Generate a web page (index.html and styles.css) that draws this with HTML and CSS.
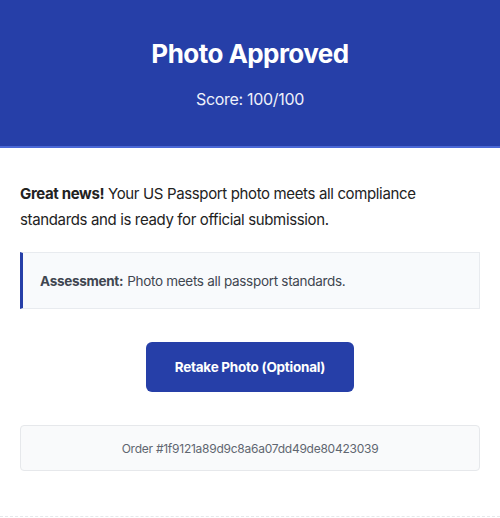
FILE: index.html
```html
<!DOCTYPE html>
<html>
<head>
<meta charset="utf-8">
<link rel="stylesheet" href="styles.css">
</head>
<body>
<div class="card">
  <header class="hero">
    <h1 class="title">Photo Approved</h1>
    <p class="score">Score: 100/100</p>
  </header>
  <main class="content">
    <p class="lead"><strong>Great news!</strong> Your US Passport photo meets all compliance standards and is ready for official submission.</p>
    <div class="assessment"><strong>Assessment:</strong> Photo meets all passport standards.</div>
    <div class="actions"><a class="btn">Retake Photo (Optional)</a></div>
    <div class="order">Order #1f9121a89d9c8a6a07dd49de80423039</div>
  </main>
</div>
</body>
</html>
```
FILE: styles.css
```css
* { box-sizing: border-box; }
html, body { margin: 0; padding: 0; background: #fff; }
body { font-family: Inter, "Noto Sans", sans-serif; color: #1f2328; }
.card { width: 500px; height: 517px; border-bottom: 1px dashed #e6e8eb; }
.hero {
  background: #263fa8;
  border-bottom: 2px solid #4a68d6;
  height: 148px;
  padding-top: 37px;
  text-align: center;
  color: #fff;
}
.title { margin: 0; font-size: 26px; font-weight: 700; line-height: 34px; letter-spacing: -0.55px; }
.score { margin: 16px 0 0; font-size: 16px; line-height: 24px; color: #eef1fb; letter-spacing: -0.3px; }
.content { padding: 33px 20px 0; }
.lead { margin: 0; font-size: 15px; line-height: 26px; color: #222; letter-spacing: -0.36px; }
.lead strong { font-weight: 700; }
.assessment {
  margin-top: 19px;
  height: 57px;
  background: #f8fafc;
  border: 1px solid #e8ebef;
  border-left: 3px solid #263fa8;
  padding: 0 17px;
  display: flex;
  align-items: center;
  font-size: 13.5px;
  letter-spacing: -0.3px;
  color: #3f4650;
}
.assessment strong { font-weight: 700; margin-right: 4px; }
.actions { display: flex; justify-content: center; margin-top: 33px; }
.btn {
  width: 208px;
  height: 50px;
  background: #263fa8;
  color: #fff;
  border-radius: 6px;
  font-size: 13.5px;
  letter-spacing: -0.25px;
  font-weight: 700;
  display: flex;
  align-items: center;
  justify-content: center;
}
.order {
  margin-top: 33px;
  height: 46px;
  background: #f9fafb;
  border: 1px solid #e6e8eb;
  border-radius: 4px;
  display: flex;
  align-items: center;
  justify-content: center;
  font-size: 12px;
  letter-spacing: -0.25px;
  color: #5f6670;
}
```
